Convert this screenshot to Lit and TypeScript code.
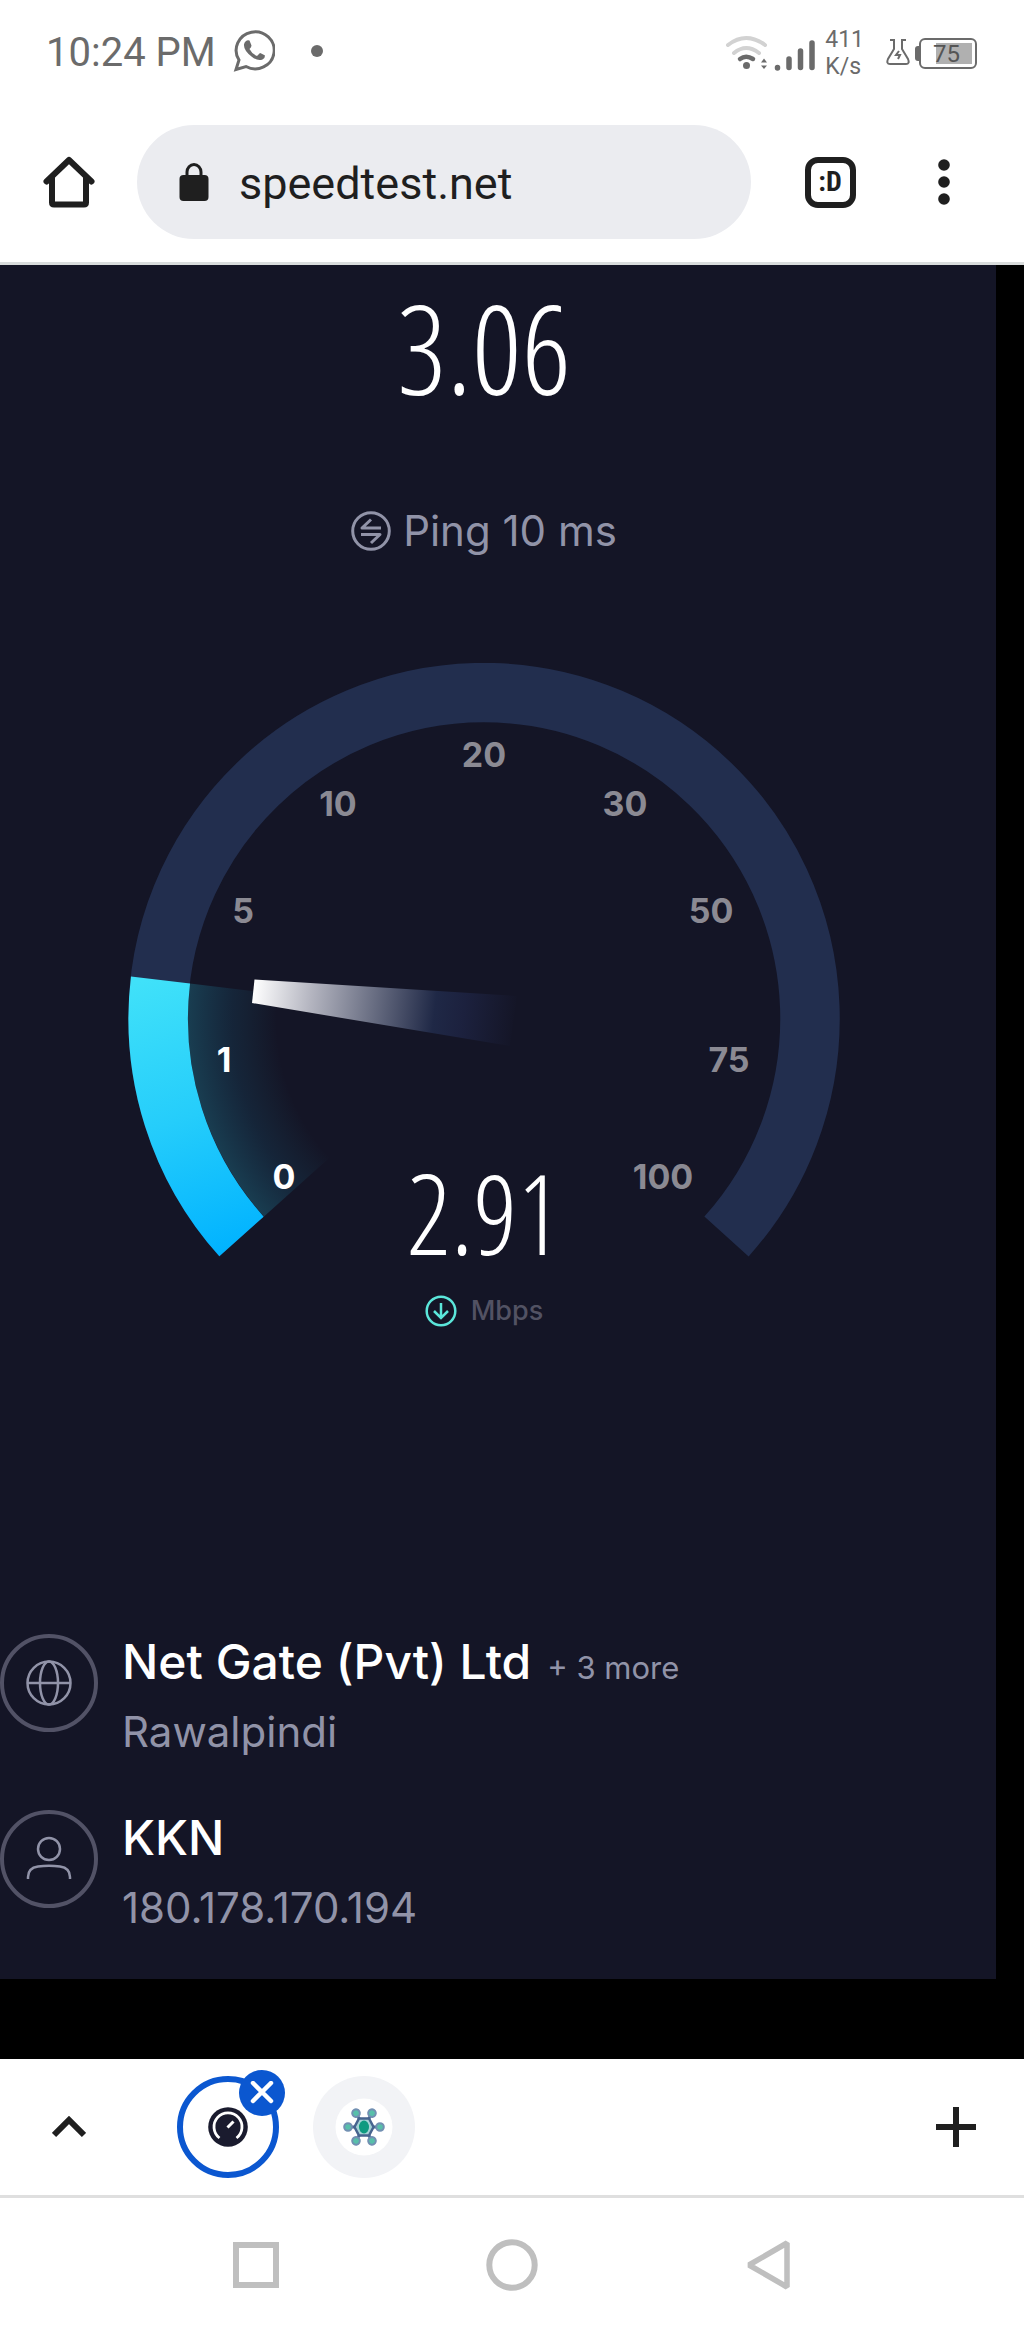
import { LitElement, html, svg, css } from "lit";
import { customElement, property } from "lit/decorators.js";
import { classMap } from "lit/directives/class-map.js";

const iconBase = css`
  svg {
    display: block;
    flex: none;
  }
  button {
    display: flex;
    align-items: center;
    justify-content: center;
    padding: 0;
    border: 0;
    background: none;
    color: inherit;
    font: inherit;
    cursor: pointer;
  }
`;

@customElement("status-bar")
class StatusBar extends LitElement {
  static styles = [
    iconBase,
    css`
      :host {
        display: flex;
        align-items: center;
        justify-content: space-between;
        height: 106px;
        padding: 0 47px 0 46px;
        box-sizing: border-box;
        background: #fff;
        color: #6b6b6b;
        font-family: Roboto, sans-serif;
      }
      .side {
        display: flex;
        align-items: center;
      }
      .time {
        font-size: 40px;
        line-height: 48px;
      }
      .chat {
        margin: 0 36px 4px 17px;
      }
      .dot {
        width: 12px;
        height: 12px;
        border-radius: 50%;
        margin-bottom: 4px;
        background: #6b6b6b;
      }
      .rate {
        display: grid;
        margin: 0 22px 0 9px;
        font-size: 23px;
        line-height: 27px;
      }
      .flask {
        margin: 0 5px 2px 0;
      }
      .battery {
        display: flex;
        align-items: center;
      }
      .cap {
        width: 4px;
        height: 15px;
        border-radius: 3px 0 0 3px;
        background: #6b6b6b;
      }
      .cell {
        box-sizing: border-box;
        width: 58px;
        height: 31px;
        padding: 3px;
        border: 2px solid #6b6b6b;
        border-radius: 6px;
      }
      .level {
        height: 100%;
        background: linear-gradient(to left, #b0b0b0 75%, transparent 75%);
        color: #555;
        font-size: 24px;
        line-height: 22px;
        padding-left: 9px;
      }
    `,
  ];
  render() {
    return html`
      <div class="side">
        <span class="time">10:24 PM</span>
        <svg class="chat" width="42" height="44" viewBox="0 0 42 44" fill="none" stroke="#6b6b6b">
          <path d="M6 31A19 18.500 0 1 1 13 37.500L3 40.500Z" stroke-width="3" stroke-linejoin="miter" />
          <path
            d="M12.500 12.500q2-2 4-1l2 5q0 1.500-2 3.500 2.500 5 7.500 7l3-3q1 0 5 2.500 0 3-2.500 4-5 2-11-3-8-6.500-7.500-12 .300-2 1.500-3z"
            fill="#6b6b6b" stroke="none" />
        </svg>
        <span class="dot"></span>
      </div>
      <div class="side">
        <svg width="91" height="40" viewBox="0 0 91 40" fill="none" stroke-linecap="round">
          <path d="M3 12Q21 -2 40 12M9 20Q21 10 34 20" stroke="#d2d2d2" stroke-width="4" />
          <path d="M15 26Q21 21.500 28 26" stroke="#6b6b6b" stroke-width="4.500" />
          <circle cx="21.500" cy="32.500" r="3.500" fill="#6b6b6b" />
          <path d="M39 25.500l-3 4h6zM39 36l-3-3.500h6z" fill="#6b6b6b" />
          <path d="M52.500 34.500v.500M64 26v8.500M75.500 18v16.500M87 10v24.500" stroke="#6b6b6b" stroke-width="5.500" />
        </svg>
        <span class="rate"><span>411</span><span>K/s</span></span>
        <svg class="flask" width="24" height="28" viewBox="0 0 24 28" fill="none" stroke="#6b6b6b" stroke-width="2">
          <path d="M4 2h4v9L2 21q-2 5 2 5h16q4 0 2-5l-6-10V2h4" />
          <path d="M13 13l-3 4h4l-2 4" />
        </svg>
        <span class="battery"><span class="cap"></span><span class="cell"><div class="level">75</div></span></span>
      </div>
    `;
  }
}

@customElement("browser-bar")
class BrowserBar extends LitElement {
  static styles = [
    iconBase,
    css`
      :host {
        display: flex;
        align-items: center;
        padding: 19px 23px 23px 0;
        border-bottom: 3px solid #d9dcdc;
        background: #fff;
        color: #1f1f1f;
        font-family: Roboto, sans-serif;
      }
      .home {
        width: 137px;
        height: 114px;
      }
      .tool {
        width: 114px;
        height: 114px;
      }
      .address {
        flex: 1;
        min-width: 0;
        display: flex;
        align-items: center;
        gap: 30px;
        box-sizing: border-box;
        height: 114px;
        margin-right: 22px;
        padding: 0 42px;
        border-radius: 57px;
        background: #ebecf0;
      }
      input {
        flex: 1;
        min-width: 0;
        padding: 4px 0 0;
        border: 0;
        outline: 0;
        background: none;
        color: #1f1f1f;
        font: 45px/56px Roboto, sans-serif;
      }
      .tabs {
        box-sizing: border-box;
        width: 51px;
        height: 51px;
        border: 6px solid #1f1f1f;
        border-radius: 13px;
        font-family: "Roboto Condensed", Roboto, sans-serif;
        font-size: 28px;
        font-weight: 700;
        line-height: 38px;
        text-align: center;
      }
    `,
  ];
  render() {
    return html`
      <button class="home" aria-label="Home">
        <svg width="52" height="52" viewBox="0 0 52 52" fill="none" stroke="#1f1f1f" stroke-width="6" stroke-linejoin="round" stroke-linecap="round">
          <path d="M3.500 25.500L26 4l22.500 21.500" />
          <path d="M9 22v24.500q0 2 2 2h30q2 0 2-2V22" />
        </svg>
      </button>
      <label class="address">
        <svg width="30" height="38" viewBox="0 0 30 38">
          <path d="M8 14V9a7 7.500 0 0 1 14 0v5" fill="none" stroke="#1f1f1f" stroke-width="3" />
          <rect x="0.500" y="12" width="29" height="26" rx="4" fill="#1f1f1f" />
        </svg>
        <input type="text" aria-label="Address" .value=${"speedtest.net"} />
      </label>
      <button class="tool" aria-label="Tabs"><span class="tabs">:D</span></button>
      <button class="tool" aria-label="Menu">
        <svg width="12" height="46" viewBox="0 0 12 46" fill="#1f1f1f">
          <circle cx="6" cy="6" r="5.800" />
          <circle cx="6" cy="23" r="5.800" />
          <circle cx="6" cy="40" r="5.800" />
        </svg>
      </button>
    `;
  }
}

const ticks = [
  { label: "0", x: 156, y: 514, lit: true },
  { label: "1", x: 96, y: 397, lit: true },
  { label: "5", x: 115, y: 248, lit: false },
  { label: "10", x: 210, y: 141, lit: false },
  { label: "20", x: 356, y: 92, lit: false },
  { label: "30", x: 497, y: 141, lit: false },
  { label: "50", x: 583, y: 248, lit: false },
  { label: "75", x: 601, y: 397, lit: false },
  { label: "100", x: 535, y: 514, lit: false },
];

@customElement("speed-gauge")
class SpeedGauge extends LitElement {
  @property() value = "";
  static styles = [
    iconBase,
    css`
      :host {
        display: grid;
        width: 100%;
        max-width: 712px;
      }
      .dial {
        grid-area: 1 / 1;
        width: 100%;
        height: auto;
        padding-bottom: 72px;
      }
      .tick {
        font-size: 34px;
        font-weight: 700;
        text-anchor: middle;
        fill: #8b8a93;
      }
      .lit {
        fill: #fff;
      }
      .readout {
        grid-area: 1 / 1;
        align-self: end;
        display: grid;
        justify-items: center;
        gap: 25px;
      }
      .value {
        font-family: "Open Sans Condensed Light", "Open Sans Condensed", "Roboto Condensed", sans-serif;
        font-size: 110px;
        font-weight: 300;
        line-height: 112px;
        color: #fff;
      }
      .unit {
        display: flex;
        align-items: center;
        gap: 14px;
        color: #525263;
        font-size: 27px;
        line-height: 36px;
        font-weight: 500;
      }
    `,
  ];
  render() {
    return html`
      <svg class="dial" viewBox="0 0 712 594" role="img" aria-label="Speed dial">
        <defs>
          <linearGradient id="fill" gradientUnits="userSpaceOnUse" x1="120" y1="585" x2="30" y2="313">
            <stop offset="0" stop-color="#00b2ff" />
            <stop offset="0.500" stop-color="#25cdfb" />
            <stop offset="1" stop-color="#40e1f9" />
          </linearGradient>
          <radialGradient id="glow" gradientUnits="userSpaceOnUse" cx="356" cy="356" r="296">
            <stop offset="0.700" stop-color="#28bdd8" stop-opacity="0" />
            <stop offset="0.850" stop-color="#1fa5d0" stop-opacity="0.110" />
            <stop offset="1" stop-color="#28bdd8" stop-opacity="0.240" />
          </radialGradient>
          <linearGradient id="needle" gradientUnits="userSpaceOnUse" x1="125" y1="328" x2="388" y2="358">
            <stop offset="0" stop-color="#fff" />
            <stop offset="0.220" stop-color="#b4b5c0" />
            <stop offset="0.690" stop-color="#1f2846" />
            <stop offset="0.800" stop-color="#1c213e" />
            <stop offset="1" stop-color="#141526" />
          </linearGradient>
        </defs>
        <path d="M113.500 573.500A326 326 0 1 1 598.500 573.500" fill="none" stroke="#222e4e" stroke-width="59.500" />
        <path d="M356 356L136 553.500A296 296 0 0 1 62 320.500Z" fill="url(#glow)" />
        <path d="M113.500 573.500A326 326 0 0 1 32.500 317" fill="none" stroke="url(#fill)" stroke-width="59.500" />
        <path d="M126.500 316.500L389 333L382 383L124 340Z" fill="url(#needle)" />
        ${ticks.map(
          (t) => svg`<text class=${classMap({ tick: true, lit: t.lit })} x=${t.x} y=${t.y + 12}>${t.label}</text>`
        )}
      </svg>
      <div class="readout">
        <div class="value">${this.value}</div>
        <div class="unit">
          <svg width="32" height="32" viewBox="0 0 32 32" fill="none" stroke="#5be6da" stroke-width="2.500">
            <circle cx="16" cy="16" r="14.300" />
            <path d="M16 8v14M9 16l7 7 7-7" />
          </svg>
          Mbps
        </div>
      </div>
    `;
  }
}

@customElement("host-row")
class HostRow extends LitElement {
  @property() name = "";
  @property() more = "";
  @property() detail = "";
  @property() kind = "globe";
  static styles = [
    iconBase,
    css`
      :host {
        display: flex;
        align-items: flex-start;
        gap: 24px;
      }
      .text {
        display: grid;
        gap: 18px;
      }
      .name {
        display: flex;
        align-items: baseline;
        gap: 16px;
        color: #fff;
        font-size: 48px;
        font-weight: 500;
        line-height: 56px;
      }
      .more {
        color: #9193a8;
        font-size: 31px;
        font-weight: 400;
        line-height: 40px;
      }
      .detail {
        color: #9193a8;
        font-size: 42px;
        line-height: 48px;
      }
    `,
  ];
  render() {
    return html`
      <svg width="98" height="98" viewBox="0 0 98 98" fill="none" stroke="#9193a8" stroke-width="2.500">
        <circle cx="49" cy="49" r="47" stroke="#525266" stroke-width="4" />
        ${this.kind === "globe"
          ? svg`<circle cx="49" cy="49" r="21.500" /><ellipse cx="49" cy="49" rx="9" ry="21.500" /><path d="M27.500 49h43" />`
          : svg`<circle cx="49" cy="39" r="11" /><path d="M28 69v-2q0-9 10-10.500 11-1.500 22 0Q70 58 70 67v2" />`}
      </svg>
      <div class="text">
        <div class="name">
          <span>${this.name}</span>${this.more ? html`<span class="more">${this.more}</span>` : ""}
        </div>
        <div class="detail">${this.detail}</div>
      </div>
    `;
  }
}

@customElement("tab-strip")
class TabStrip extends LitElement {
  static styles = [
    iconBase,
    css`
      :host {
        display: flex;
        align-items: center;
        height: 136px;
        border-bottom: 3px solid #dfdfdf;
        background: #fff;
      }
      .expand {
        width: 137px;
        height: 136px;
      }
      .tabs {
        flex: 1;
        display: flex;
        gap: 34px;
        padding-left: 40px;
      }
      .tab {
        position: relative;
      }
      .page {
        box-sizing: border-box;
        width: 102px;
        height: 102px;
        border-radius: 50%;
        background: #f2f3f6;
      }
      .current {
        border: 6px solid #0b57d0;
        background: #fff;
      }
      .close {
        position: absolute;
        top: -6px;
        right: -6px;
        width: 46px;
        height: 46px;
        border-radius: 50%;
        background: #0b57d0;
      }
      .add {
        width: 136px;
        height: 136px;
      }
    `,
  ];
  render() {
    const arms = [0, 60, 120, 180, 240, 300];
    return html`
      <button class="expand" aria-label="Expand">
        <svg width="34" height="22" viewBox="0 0 34 22" fill="none" stroke="#1f1f1f" stroke-width="6">
          <path d="M2 19L17 4l15 15" />
        </svg>
      </button>
      <div class="tabs">
        <div class="tab">
          <button class="page current" aria-label="Speedtest tab">
            <svg width="40" height="40" viewBox="0 0 40 40">
              <circle cx="20" cy="20" r="19.800" fill="#1a1b2e" />
              <path d="M11.500 31A14 14 0 1 1 28.500 31" fill="none" stroke="#fff" stroke-width="2.800" />
              <path d="M19.500 20.500l6-6" stroke="#fff" stroke-width="3" />
            </svg>
          </button>
          <button class="close" aria-label="Close tab">
            <svg width="24" height="24" viewBox="0 0 24 24" fill="none" stroke="#fff" stroke-width="4.500" stroke-linecap="round">
              <path d="M3 2l18 18M21 2L3 20" />
            </svg>
          </button>
        </div>
        <div class="tab">
          <button class="page" aria-label="Network tab">
            <svg width="58" height="58" viewBox="0 0 58 58">
              <circle cx="29" cy="29" r="28.500" fill="#fff" />
              ${arms.map(
                (a) => svg`<g transform=${`rotate(${a} 29 29)`}>
                  <path d="M37 29h5" stroke="#4c6c96" stroke-width="3" />
                  <circle cx="45" cy="29" r="3.800" fill="#58bfaa" stroke="#7290b2" stroke-width="2" />
                </g>`
              )}
              <path d="M24 20.500h10l4.500 8.500-4.500 8.500H24L19.500 29z" fill="#a5d3d6" stroke="#47648f" stroke-width="2.500" />
              <ellipse cx="29" cy="29" rx="5" ry="6.500" fill="#0e9a80" />
            </svg>
          </button>
        </div>
      </div>
      <button class="add" aria-label="New tab">
        <svg width="40" height="40" viewBox="0 0 40 40" stroke="#1f1f1f" stroke-width="6">
          <path d="M20 0v40M0 20h40" />
        </svg>
      </button>
    `;
  }
}

@customElement("system-nav")
class SystemNav extends LitElement {
  static styles = [
    iconBase,
    css`
      :host {
        display: grid;
        grid-template-columns: repeat(3, 1fr);
        padding: 0 12.5%;
        background: #fff;
      }
      button {
        height: 134px;
      }
    `,
  ];
  render() {
    return html`
      <button aria-label="Recent apps">
        <svg width="52" height="52" viewBox="0 0 52 52" fill="none" stroke="#bfbfbf" stroke-width="6">
          <path d="M6 6h40v40H6z" />
        </svg>
      </button>
      <button aria-label="Home">
        <svg width="52" height="52" viewBox="0 0 52 52" fill="none" stroke="#bfbfbf" stroke-width="6">
          <circle cx="26" cy="26" r="22.700" />
        </svg>
      </button>
      <button aria-label="Back">
        <svg width="52" height="52" viewBox="0 0 52 52" fill="none" stroke="#bfbfbf" stroke-width="5.500" stroke-linejoin="bevel">
          <path d="M7 26L45 4v44z" />
        </svg>
      </button>
    `;
  }
}

@customElement("app-root")
class AppRoot extends LitElement {
  static styles = [
    iconBase,
    css`
      :host {
        display: block;
        background: #fff;
        font-family: Inter, sans-serif;
      }
      .viewport {
        padding: 0 28px 80px 0;
        background: #000;
      }
      .panel {
        display: grid;
        padding: 18px 28px 47px 0;
        background: #141526;
      }
      .result {
        display: grid;
        justify-items: center;
      }
      .speed {
        margin-bottom: 96px;
        font-family: "Open Sans Condensed Light", "Open Sans Condensed", "Roboto Condensed", sans-serif;
        font-size: 124px;
        font-weight: 300;
        line-height: 128px;
        color: #fff;
      }
      .ping {
        display: flex;
        align-items: center;
        gap: 12px;
        margin-bottom: 108px;
        color: #9193a8;
        font-size: 42px;
        line-height: 48px;
      }
      .hosts {
        display: grid;
        gap: 54px;
        margin-top: 305px;
      }
    `,
  ];
  render() {
    return html`
      <status-bar></status-bar>
      <browser-bar></browser-bar>
      <main class="viewport">
        <div class="panel">
          <section class="result">
            <div class="speed">3.06</div>
            <div class="ping">
              <svg width="40" height="40" viewBox="0 0 40 40" fill="none" stroke="#9193a8" stroke-width="3">
                <circle cx="20" cy="20" r="18.300" />
                <path d="M30 17H11l9-8.500M10 23.500h19l-9 8.500" stroke-linejoin="round" />
              </svg>
              <span>Ping 10 ms</span>
            </div>
            <speed-gauge value="2.91"></speed-gauge>
          </section>
          <section class="hosts">
            <host-row kind="globe" name="Net Gate (Pvt) Ltd" more="+ 3 more" detail="Rawalpindi"></host-row>
            <host-row kind="person" name="KKN" detail="180.178.170.194"></host-row>
          </section>
        </div>
      </main>
      <tab-strip></tab-strip>
      <system-nav></system-nav>
    `;
  }
}
